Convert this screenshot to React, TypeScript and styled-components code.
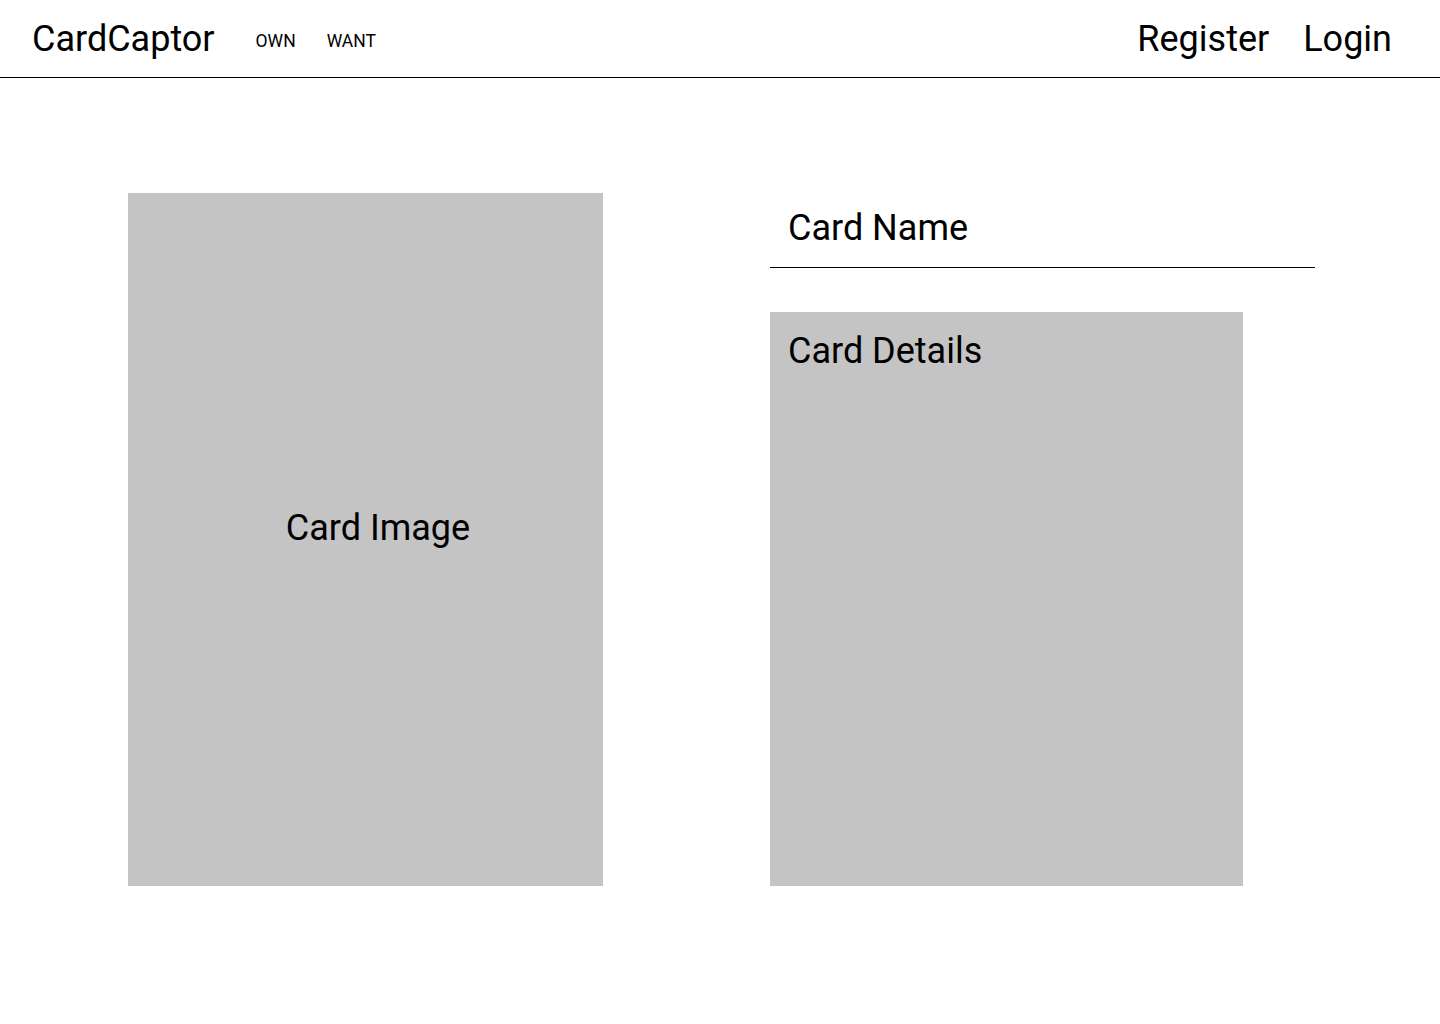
import styled, { createGlobalStyle } from "styled-components";

const GlobalStyle = createGlobalStyle`
  html, body {
    margin: 0;
    padding: 0;
    background: #ffffff;
  }
  body {
    font-family: Roboto, "Liberation Sans", Arial, sans-serif;
    color: #000000;
  }
`;

const Header = styled.header`
  height: 77px;
  border-bottom: 1px solid #000000;
  display: flex;
  align-items: center;
  padding: 0 48px 0 32px;
`;

const Logo = styled.a`
  font-size: 36px;
  line-height: 42px;
  color: #000;
  text-decoration: none;
`;

const NavList = styled.nav`
  display: flex;
  gap: 31px;
  margin-left: 41px;
  padding-top: 4px;
`;

const NavLink = styled.a`
  font-size: 17.5px;
  line-height: 20px;
  text-transform: uppercase;
  color: #000;
  text-decoration: none;
`;

const AuthLinks = styled.div`
  margin-left: auto;
  display: flex;
  gap: 34px;
`;

const AuthLink = styled.a`
  font-size: 36px;
  line-height: 42px;
  color: #000;
  text-decoration: none;
`;

const Main = styled.main`
  display: flex;
  gap: 167px;
  padding: 115px 0 0 128px;
`;

const Placeholder = styled.div`
  background: #c4c4c4;
  font-size: 36px;
  line-height: 42px;
`;

const CardImage = styled(Placeholder)`
  width: 475px;
  height: 693px;
  display: flex;
  align-items: center;
  justify-content: center;
  padding: 0 0 23px 25px;
  box-sizing: border-box;
`;

const InfoColumn = styled.section`
  display: flex;
  flex-direction: column;
`;

const CardName = styled.h1`
  margin: 0;
  width: 545px;
  box-sizing: border-box;
  padding: 14px 18px 18px;
  font-size: 36px;
  line-height: 42px;
  font-weight: 400;
  border-bottom: 1px solid #000;
`;

const CardDetails = styled(Placeholder)`
  margin-top: 44px;
  width: 473px;
  height: 574px;
  box-sizing: border-box;
  padding: 18px 18px;
`;

export default function App() {
  return (
    <>
      <GlobalStyle />
      <Header>
        <Logo href="#">CardCaptor</Logo>
        <NavList>
          <NavLink href="#">Own</NavLink>
          <NavLink href="#">Want</NavLink>
        </NavList>
        <AuthLinks>
          <AuthLink href="#">Register</AuthLink>
          <AuthLink href="#">Login</AuthLink>
        </AuthLinks>
      </Header>
      <Main>
        <CardImage>Card Image</CardImage>
        <InfoColumn>
          <CardName>Card Name</CardName>
          <CardDetails>Card Details</CardDetails>
        </InfoColumn>
      </Main>
    </>
  );
}
